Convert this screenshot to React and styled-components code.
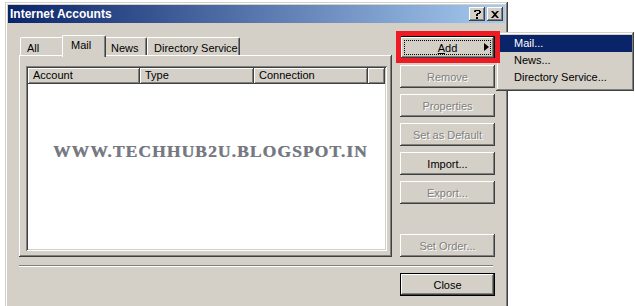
import styled, { createGlobalStyle, css } from 'styled-components'

const face = '#d4d0c8'

const GlobalStyle = createGlobalStyle`
  html, body {
    margin: 0;
    padding: 0;
    background: #fff;
    overflow: hidden;
    font-family: "Liberation Sans", Arial, sans-serif;
    font-size: 11px;
    color: #000;
  }
`

const raised = css`
  box-shadow: inset -1px -1px #404040, inset 1px 1px #fff,
    inset -2px -2px #808080, inset 2px 2px ${face};
`

const Page = styled.div`
  position: relative;
  width: 635px;
  height: 306px;
  overflow: hidden;
`

const Window = styled.div`
  box-sizing: border-box;
  margin: 2px 0 0 5px;
  width: 503px;
  height: 330px;
  padding: 3px;
  background: ${face};
  box-shadow: inset -1px -1px #404040, inset 1px 1px ${face},
    inset -2px -2px #808080, inset 2px 2px #fff;
`

const TitleBar = styled.div`
  height: 18px;
  display: flex;
  align-items: center;
  padding: 0 2px;
  background: linear-gradient(to right, #0a246a, #a6caf0);
  color: #fff;
  font-weight: bold;
  font-size: 12px;
`

const TitleText = styled.span`
  flex: 1;
`

const TitleButton = styled.div`
  box-sizing: border-box;
  width: 16px;
  height: 14px;
  margin-left: ${p => (p.$gap ? 2 : 0)}px;
  background: ${face};
  ${raised};
  color: #000;
  display: flex;
  align-items: center;
  justify-content: center;
`

const Body = styled.div`
  padding: 12px 10px 0 11px;
`

const MainRow = styled.div`
  display: flex;
  gap: 8px;
`

const LeftCol = styled.div`
  width: 373px;
  display: flex;
  flex-direction: column;
`

const TabRow = styled.div`
  height: 20px;
  display: flex;
  align-items: flex-start;
  padding-left: 1px;
`

const Tab = styled.div`
  box-sizing: border-box;
  position: relative;
  width: ${p => p.$w}px;
  height: ${p => (p.$active ? 22 : 18)}px;
  margin: ${p => (p.$active ? '0 -2px -2px' : '2px 0 0')};
  z-index: ${p => (p.$active ? 2 : 1)};
  background: ${face};
  border-top: 1px solid #fff;
  border-left: 1px solid #fff;
  border-right: 1px solid #404040;
  border-radius: 2px 2px 0 0;
  box-shadow: inset -1px 0 #808080;
  padding: ${p => (p.$active ? '2px 0 0 8px' : '3px 0 0 6px')};
  line-height: 14px;
`

const Panel = styled.div`
  box-sizing: border-box;
  height: 202px;
  padding: 11px 5px 6px 7px;
  background: ${face};
  box-shadow: inset -1px -1px #404040, inset 1px 1px #fff,
    inset -2px -2px #808080;
`

const ListView = styled.div`
  box-sizing: border-box;
  height: 185px;
  padding: 2px;
  background: #fff;
  display: flex;
  flex-direction: column;
  box-shadow: inset 1px 1px #808080, inset -1px -1px #fff,
    inset 2px 2px #404040, inset -2px -2px ${face};
`

const Header = styled.div`
  display: flex;
  height: 16px;
`

const HeaderCell = styled.div`
  box-sizing: border-box;
  width: ${p => p.$w}px;
  flex: ${p => (p.$w ? 'none' : 1)};
  height: 16px;
  padding-left: 5px;
  line-height: 15px;
  background: ${face};
  ${raised};
`

const ListBody = styled.div`
  flex: 1;
  padding: 57px 0 0 25px;
`

const Watermark = styled.div`
  font-family: "Liberation Serif", "Times New Roman", serif;
  font-weight: bold;
  font-size: 17.5px;
  letter-spacing: 1.1px;
  color: #77787e;
  text-shadow: 0.5px 0 #8c98ac;
`

const RightCol = styled.div`
  width: 95px;
  padding-top: 1px;
  display: flex;
  flex-direction: column;
  gap: 6px;
`

const Button = styled.div`
  box-sizing: border-box;
  position: relative;
  width: 95px;
  height: 23px;
  display: flex;
  align-items: center;
  justify-content: center;
  background: ${face};
  color: ${p => (p.$disabled ? '#808080' : '#000')};
  text-shadow: ${p => (p.$disabled ? '1px 1px #fff' : 'none')};
  margin-top: ${p => (p.$push ? 'auto' : 0)};
  ${p =>
    p.$default
      ? css`
          box-shadow: inset 0 0 0 1px #000, inset -2px -2px #404040,
            inset 2px 2px #fff, inset -3px -3px #808080;
        `
      : raised};
`

const Focus = styled.div`
  position: absolute;
  inset: 4px;
  border: 1px dotted #000;
`

const Arrow = styled.div`
  position: absolute;
  right: 6px;
  top: 7px;
  width: 0;
  height: 0;
  border-top: 4px solid transparent;
  border-bottom: 4px solid transparent;
  border-left: 5px solid #000;
`

const Separator = styled.div`
  width: 474px;
  margin-top: 8px;
  border-top: 1px solid #808080;
  border-bottom: 1px solid #fff;
`

const Footer = styled.div`
  display: flex;
  justify-content: flex-end;
  margin-top: 6px;
`

const Menu = styled.div`
  position: absolute;
  left: 496px;
  top: 32px;
  box-sizing: border-box;
  width: 138px;
  height: 59px;
  padding: 3px 2px 1px 3px;
  background: ${face};
  box-shadow: inset -1px -1px #404040, inset 1px 1px ${face},
    inset -2px -2px #808080, inset 2px 2px #fff;
`

const MenuItem = styled.div`
  height: 17px;
  line-height: 17px;
  padding-left: 15px;
  background: ${p => (p.$active ? '#0a246a' : 'transparent')};
  color: ${p => (p.$active ? '#fff' : '#000')};
`

const Highlight = styled.div`
  position: absolute;
  left: 396px;
  top: 31px;
  width: 104px;
  height: 32px;
  box-sizing: border-box;
  border: 5px solid #ed1c24;
`

const tabs = [
  { label: 'All', w: 44 },
  { label: 'Mail', w: 44, active: true },
  { label: 'News', w: 43 },
  { label: 'Directory Service', w: 93 },
]

const columns = [
  { label: 'Account', w: 112 },
  { label: 'Type', w: 114 },
  { label: 'Connection', w: 114 },
  { label: '' },
]

const actions = [
  { label: 'Remove', disabled: true },
  { label: 'Properties', disabled: true },
  { label: 'Set as Default', disabled: true },
  { label: 'Import...' },
  { label: 'Export...', disabled: true },
]

export default function App() {
  return (
    <Page>
      <GlobalStyle />
      <Window>
        <TitleBar>
          <TitleText>Internet Accounts</TitleText>
          <TitleButton>
            <svg width="8" height="10" viewBox="0 0 8 10">
              <path d="M1 1h6v1h1v2h-1v1h-2v2h-2v-2h1v-1h2v-2h-3v1h-2v-1h1z" fill="#000" />
              <rect x="3" y="8" width="2" height="2" fill="#000" />
            </svg>
          </TitleButton>
          <TitleButton $gap>
            <svg width="8" height="7" viewBox="0 0 8 7">
              <path d="M0 0h2l2 2 2-2h2l-3 3.5 3 3.5h-2l-2-2-2 2h-2l3-3.5z" fill="#000" />
            </svg>
          </TitleButton>
        </TitleBar>
        <Body>
          <MainRow>
            <LeftCol>
              <TabRow>
                {tabs.map(t => (
                  <Tab key={t.label} $w={t.w} $active={t.active}>{t.label}</Tab>
                ))}
              </TabRow>
              <Panel>
                <ListView>
                  <Header>
                    {columns.map((c, i) => (
                      <HeaderCell key={i} $w={c.w}>{c.label}</HeaderCell>
                    ))}
                  </Header>
                  <ListBody>
                    <Watermark>WWW.TECHHUB2U.BLOGSPOT.IN</Watermark>
                  </ListBody>
                </ListView>
              </Panel>
            </LeftCol>
            <RightCol>
              <Button $default>
                <Focus />
                <span><u>A</u>dd</span>
                <Arrow />
              </Button>
              {actions.map(a => (
                <Button key={a.label} $disabled={a.disabled}>{a.label}</Button>
              ))}
              <Button $disabled $push>Set Order...</Button>
            </RightCol>
          </MainRow>
          <Separator />
          <Footer>
            <Button $default>Close</Button>
          </Footer>
        </Body>
      </Window>
      <Menu>
        <MenuItem $active>Mail...</MenuItem>
        <MenuItem>News...</MenuItem>
        <MenuItem>Directory Service...</MenuItem>
      </Menu>
      <Highlight />
    </Page>
  )
}
